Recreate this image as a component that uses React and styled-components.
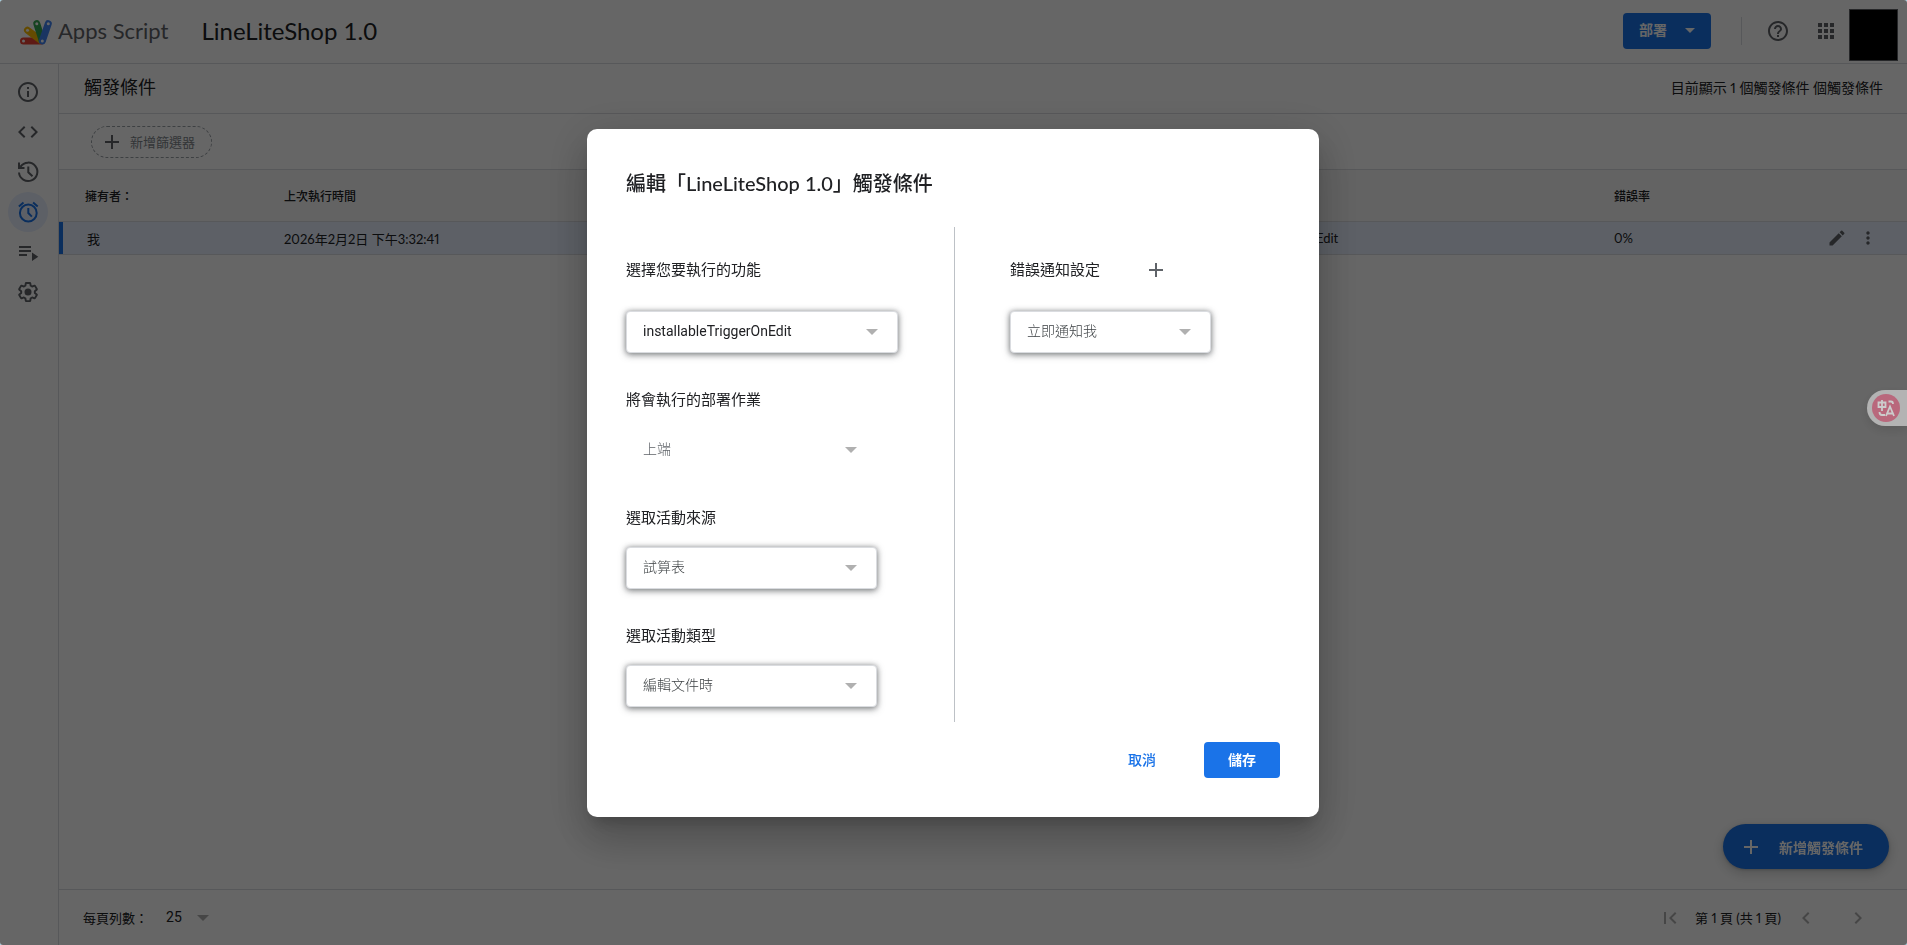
import React from "react";
import styled, { createGlobalStyle, css } from "styled-components";
import {
  MdAdd,
  MdApps,
  MdChevronLeft,
  MdChevronRight,
  MdCode,
  MdEdit,
  MdFirstPage,
  MdHelpOutline,
  MdInfoOutline,
  MdMoreVert,
} from "react-icons/md";

const sans = `Lato, "Noto Sans CJK TC", sans-serif`;
const roboto = `Roboto, "Noto Sans CJK TC", sans-serif`;
const line = "#dadce0";
const blue = "#1a73e8";

const GlobalStyle = createGlobalStyle`
  *, *::before, *::after { box-sizing: border-box; }
  html { background: #a5d3e6; }
  body { margin: 0; color: #202124; font-family: ${sans}; font-variant-numeric: proportional-nums; }
  button, select { font: inherit; }
  svg { display: block; flex: none; }
`;

const Page = styled.div`
  min-height: 100vh;
  display: flex;
  flex-direction: column;
  background: #fff;
  border-radius: 3px;
  overflow: hidden;
`;

const Header = styled.header`
  display: flex;
  align-items: center;
  height: 64px;
  padding: 0 9px 2px 16px;
  border-bottom: 1px solid ${line};
`;

const Brand = styled.a`
  display: flex;
  align-items: center;
  gap: 4px;
  color: #5f6368;
  font-size: 22px;
  line-height: 32px;
  text-decoration: none;
`;

const ProjectName = styled.h1`
  flex: 1;
  margin: 0 0 0 33px;
  font-size: 24px;
  line-height: 32px;
  font-weight: 400;
  font-variant-numeric: normal;
`;

const DeployButton = styled.button`
  display: flex;
  align-items: center;
  justify-content: space-between;
  width: 88px;
  height: 36px;
  padding: 0 16px 4px;
  border: 0;
  border-radius: 4px;
  background: ${blue};
  color: #fff;
  font-size: 14px;
  font-weight: 700;
  svg { margin-top: 4px; }
`;

const HeaderDivider = styled.span`
  width: 1px;
  height: 28px;
  margin: 0 24px 0 30px;
  background: ${line};
`;

const IconButton = styled.button`
  display: flex;
  align-items: center;
  justify-content: center;
  width: ${(p) => p.$size || 24}px;
  height: ${(p) => p.$size || 24}px;
  padding: 0;
  border: 0;
  background: none;
  color: ${(p) => p.$color || "#5f6368"};
`;

const HeaderActions = styled.div`
  display: flex;
  align-items: center;
  gap: 24px;
`;

const Avatar = styled.div`
  width: 49px;
  height: 52px;
  margin: 8px 0 0 11px;
  border: 1px solid #5f6368;
  background: #000;
`;

const Body = styled.div`
  flex: 1;
  display: flex;
`;

const Sidebar = styled.nav`
  display: flex;
  flex-direction: column;
  width: 59px;
  padding: 8px;
  border-right: 1px solid ${line};
`;

const NavLink = styled.a`
  display: flex;
  align-items: center;
  justify-content: center;
  width: 40px;
  height: 40px;
  border-radius: 50%;
  color: ${(p) => (p.$active ? blue : "#5f6368")};
  background: ${(p) => (p.$active ? "#e8f0fe" : "none")};
`;

const Main = styled.main`
  flex: 1;
  min-width: 0;
  display: flex;
  flex-direction: column;
`;

const TitleBar = styled.div`
  display: flex;
  align-items: center;
  justify-content: space-between;
  height: 50px;
  padding: 0 24px 4px 25px;
  border-bottom: 1px solid ${line};
  font-size: 14px;
`;

const PageTitle = styled.h2`
  margin: 0;
  font-size: 18px;
  line-height: 24px;
  font-weight: 400;
`;

const FilterBar = styled.div`
  display: flex;
  align-items: center;
  height: 56px;
  padding: 0 32px;
  border-bottom: 1px solid ${line};
`;

const FilterChip = styled.button`
  display: flex;
  align-items: center;
  gap: 6px;
  height: 32px;
  padding: 0 16px 0 8px;
  border: 1px dashed #9aa0a6;
  border-radius: 16px;
  background: none;
  color: #80868b;
  font-size: 13px;
  svg { color: #5f6368; }
`;

const Table = styled.table`
  width: 100%;
  border-collapse: separate;
  border-spacing: 0;
  table-layout: fixed;
`;

const HeadRow = styled.tr`
  height: 52px;
  background: #f8f8f8;
`;

const HeadCell = styled.th`
  width: ${(p) => p.$width};
  padding: 0 0 0 ${(p) => (p.$first ? 26 : 0)}px;
  border-bottom: 1px solid ${line};
  text-align: left;
  font-size: 12px;
  font-weight: 500;
`;

const Row = styled.tr`
  height: 33px;
  background: #e8f0fe;
`;

const Cell = styled.td`
  padding: 0;
  border-bottom: 1px solid ${line};
  font-size: 13px;
  ${(p) =>
    p.$first &&
    css`
      padding-left: 28px;
      box-shadow: inset 4px 0 0 ${blue};
    `}
`;

const RowActions = styled.div`
  display: flex;
  justify-content: flex-end;
  gap: 11px;
  padding-right: 29px;
`;

const Footer = styled.footer`
  display: flex;
  align-items: center;
  justify-content: space-between;
  height: 56px;
  margin-top: auto;
  padding: 0 37px 0 24px;
  border-top: 1px solid ${line};
  font-size: 13px;
`;

const PageSize = styled.label`
  display: flex;
  align-items: center;
  gap: 1px;
`;

const Pager = styled.div`
  display: flex;
  align-items: center;
  gap: 13px;
`;

const PagerArrows = styled.div`
  display: flex;
  gap: 28px;
`;

const Fab = styled.button`
  position: fixed;
  right: 18px;
  bottom: 76px;
  display: flex;
  align-items: center;
  gap: 16px;
  height: 45px;
  padding: 0 26px 0 16px;
  border: 0;
  border-radius: 23px;
  background: ${blue};
  color: #fff;
  font-size: 14px;
  font-weight: 700;
  box-shadow: 0 1px 3px rgba(60, 64, 67, 0.3), 0 4px 8px 3px rgba(60, 64, 67, 0.15);
`;

const Overlay = styled.div`
  position: fixed;
  inset: 0;
  display: flex;
  align-items: center;
  justify-content: center;
  padding-right: 1px;
  border-radius: 3px;
  background: rgba(0, 0, 0, 0.6);
`;

const Dialog = styled.form`
  width: 732px;
  padding: 39px;
  border-radius: 10px;
  background: #fff;
  box-shadow: 0 11px 15px -7px rgba(0, 0, 0, 0.2), 0 24px 38px 3px rgba(0, 0, 0, 0.14),
    0 9px 46px 8px rgba(0, 0, 0, 0.12);
`;

const DialogTitle = styled.h2`
  margin: 0 0 29px;
  font-size: 20px;
  line-height: 30px;
  font-weight: 500;
  font-variant-numeric: normal;
`;

const Columns = styled.div`
  display: grid;
  grid-template-columns: 329px 1fr;
`;

const Column = styled.div`
  display: flex;
  flex-direction: column;
  gap: 36px;
  padding: 32px 0 15px ${(p) => (p.$right ? 55 : 0)}px;
  border-right: ${(p) => (p.$right ? "0" : "1px solid #bdc1c6")};
`;

const Field = styled.div`
  display: flex;
  flex-direction: column;
  align-items: flex-start;
  gap: ${(p) => (p.$roomy ? 32 : 20)}px;
`;

const FieldHead = styled.div`
  display: flex;
  align-items: center;
  gap: 44px;
  height: 20px;
  button { margin-top: 3px; }
`;

const FieldLabel = styled.label`
  font-size: 15px;
  line-height: 20px;
`;

const SelectBox = styled.span`
  position: relative;
  display: inline-flex;
  width: ${(p) => p.$width}px;
  height: ${(p) => p.$height || 42}px;
  svg {
    position: absolute;
    right: ${(p) => (p.$compact ? 0 : 20)}px;
    top: 50%;
    margin-top: -3px;
    color: #b0b0b0;
    pointer-events: none;
  }
`;

const Select = styled.select`
  appearance: none;
  width: 100%;
  padding: 0 16px 2px 16px;
  border: 1px solid ${(p) => (p.$flat ? "transparent" : line)};
  border-radius: 4px;
  background: #fff;
  color: ${(p) => p.$color || "#3c4043"};
  font-family: ${roboto};
  font-size: 14px;
  font-weight: ${(p) => (p.$light ? 300 : 400)};
  box-shadow: ${(p) =>
    p.$flat ? "none" : "0 0 5px rgba(60, 64, 67, 0.35), 0 2px 7px rgba(60, 64, 67, 0.55)"};
`;

const DialogActions = styled.div`
  display: flex;
  justify-content: flex-end;
  gap: 24px;
  margin-top: 20px;
`;

const DialogButton = styled.button`
  width: 76px;
  height: 36px;
  padding: 0 0 2px;
  border: 0;
  border-radius: 4px;
  background: ${(p) => (p.$primary ? blue : "none")};
  color: ${(p) => (p.$primary ? "#fff" : blue)};
  font-size: 14px;
  font-weight: ${(p) => (p.$primary ? 700 : 500)};
`;

const TranslateTab = styled.button`
  position: fixed;
  right: 0;
  top: 390px;
  display: flex;
  align-items: center;
  width: 40px;
  height: 36px;
  padding: 0 0 0 5px;
  border: 0;
  border-radius: 18px 0 0 18px;
  background: #b3b3b3;
  box-shadow: 0 4px 12px rgba(0, 0, 0, 0.12);
`;

const Caret = () => (
  <svg width="12" height="6" viewBox="0 0 12 6" fill="currentColor" aria-hidden="true">
    <path d="M0 0h12L6 6z" />
  </svg>
);

const Logo = () => (
  <svg width="38" height="32" viewBox="0 0 38 32" fill="none" strokeLinecap="round" strokeWidth="7" aria-hidden="true">
    <path d="M7.5 26H25" stroke="#ea4335" />
    <path d="M11.5 15.2L25 25.4" stroke="#fbbc04" />
    <path d="M20.8 8.7L26 25" stroke="#34a853" />
    <path d="M32.3 8.7L26.3 26" stroke="#4285f4" />
    <g fill="#fff">
      <circle cx="7.5" cy="26" r="1.5" />
      <circle cx="11.5" cy="15.2" r="1.5" />
      <circle cx="20.8" cy="8.7" r="1.5" />
      <circle cx="32.3" cy="8.7" r="1.5" />
      <circle cx="26.3" cy="26" r="1.5" />
    </g>
  </svg>
);

const HistoryIcon = () => (
  <svg width="24" height="24" viewBox="0 0 24 24" fill="none" stroke="currentColor" strokeWidth="2" aria-hidden="true">
    <path d="M4.6 6.6A9.2 9.2 0 1 1 3 12.5" />
    <path d="M3 2.5V8h5.5" />
    <path d="M3 8V4.4L6.6 8z" fill="currentColor" stroke="none" />
    <path d="M12.3 6.5v5.7l4.2 4" />
  </svg>
);

const AlarmIcon = () => (
  <svg width="24" height="24" viewBox="0 0 24 24" fill="none" stroke="currentColor" strokeWidth="2" aria-hidden="true">
    <circle cx="12.3" cy="13" r="8.4" />
    <path d="M12.3 8v5l3.6 3.6M2.9 6.4l4.6-3.9M21.7 6.4l-4.6-3.9" />
  </svg>
);

const PlaylistIcon = () => (
  <svg width="24" height="24" viewBox="0 0 24 24" fill="currentColor" aria-hidden="true">
    <path d="M3 6h12v2H3zM3 10h12v2H3zM3 14h8v2H3zM16 12.5v8.5l6.3-4.2z" />
  </svg>
);

const GearIcon = () => (
  <svg width="24" height="24" viewBox="0 0 24 24" aria-hidden="true">
    <path
      transform="translate(1.1 1.1) scale(.91)"
      fill="none"
      stroke="currentColor"
      strokeWidth="2.1"
      strokeLinejoin="round"
      d="M19.43 12.98c.04-.32.07-.64.07-.98 0-.34-.03-.66-.07-.98l2.11-1.65c.19-.15.24-.42.12-.64l-2-3.46a.5.5 0 0 0-.61-.22l-2.49 1c-.52-.4-1.08-.73-1.69-.98l-.38-2.65A.488.488 0 0 0 14 2h-4c-.25 0-.46.18-.49.42l-.38 2.65c-.61.25-1.17.59-1.69.98l-2.49-1a.5.5 0 0 0-.61.22l-2 3.46c-.13.22-.07.49.12.64l2.11 1.65c-.04.32-.07.65-.07.98 0 .33.03.66.07.98l-2.11 1.65c-.19.15-.24.42-.12.64l2 3.46a.5.5 0 0 0 .61.22l2.49-1c.52.4 1.08.73 1.69.98l.38 2.65c.03.24.24.42.49.42h4c.25 0 .46-.18.49-.42l.38-2.65c.61-.25 1.17-.59 1.69-.98l2.49 1a.5.5 0 0 0 .61-.22l2-3.46c.12-.22.07-.49-.12-.64z"
    />
    <circle cx="12" cy="12" r="3.5" fill="currentColor" />
  </svg>
);

const TranslateIcon = () => (
  <svg width="28" height="28" viewBox="0 0 28 28" fill="none" stroke="#ccc" strokeWidth="1.8" aria-hidden="true">
    <circle cx="14" cy="14" r="14" fill="#b9687c" stroke="none" />
    <path d="M6.5 8.5h7v4.5h-7zM10 6v11M16.500 7.500h2.500q2 0 2 2.500M7.500 18q0 3 2.500 3h3" />
    <path d="M14 22l4-9.500 4 9.500M15.300 19.500h5.400" />
  </svg>
);

const navItems = [
  { name: "overview", label: "總覽", icon: <MdInfoOutline size={24} /> },
  { name: "editor", label: "編輯器", icon: <MdCode size={24} /> },
  { name: "history", label: "專案記錄", icon: <HistoryIcon /> },
  { name: "triggers", label: "觸發條件", icon: <AlarmIcon />, active: true },
  { name: "executions", label: "執行項目", icon: <PlaylistIcon /> },
  { name: "settings", label: "專案設定", icon: <GearIcon /> },
];

const fields = [
  { id: "fn", label: "選擇您要執行的功能", value: "installableTriggerOnEdit", width: 272, roomy: true, color: "#202124" },
  { id: "deployment", label: "將會執行的部署作業", value: "上端", width: 251, flat: true, light: true, color: "#5f6368" },
  { id: "source", label: "選取活動來源", value: "試算表", width: 251, light: true },
  { id: "event", label: "選取活動類型", value: "編輯文件時", width: 251, light: true },
];

function SelectField({ id, value, width, flat, light, color }) {
  return (
    <SelectBox $width={width}>
      <Select id={id} defaultValue={value} $flat={flat} $light={light} $color={color}>
        <option>{value}</option>
      </Select>
      <Caret />
    </SelectBox>
  );
}

export default function App() {
  return (
    <>
      <GlobalStyle />
      <Page>
        <Header>
          <Brand href="#home">
            <Logo />
            Apps Script
          </Brand>
          <ProjectName>LineLiteShop 1.0</ProjectName>
          <DeployButton type="button">
            部署
            <svg width="10" height="5" viewBox="0 0 10 5" fill="currentColor" aria-hidden="true">
              <path d="M0 0h10L5 5z" />
            </svg>
          </DeployButton>
          <HeaderDivider />
          <HeaderActions>
            <IconButton type="button" aria-label="說明"><MdHelpOutline size={24} /></IconButton>
            <IconButton type="button" aria-label="Google 應用程式"><MdApps size={24} /></IconButton>
          </HeaderActions>
          <Avatar />
        </Header>
        <Body>
          <Sidebar>
            {navItems.map((item) => (
              <NavLink key={item.name} href={`#${item.name}`} aria-label={item.label} $active={item.active}>
                {item.icon}
              </NavLink>
            ))}
          </Sidebar>
          <Main>
            <TitleBar>
              <PageTitle>觸發條件</PageTitle>
              <span>目前顯示 1 個觸發條件 個觸發條件</span>
            </TitleBar>
            <FilterBar>
              <FilterChip type="button">
                <MdAdd size={24} />
                新增篩選器
              </FilterChip>
            </FilterBar>
            <Table>
              <thead>
                <HeadRow>
                  <HeadCell $width="225px" $first>擁有者：</HeadCell>
                  <HeadCell>上次執行時間</HeadCell>
                  <HeadCell $width="410px" />
                  <HeadCell $width="140px">錯誤率</HeadCell>
                  <HeadCell $width="153px" />
                </HeadRow>
              </thead>
              <tbody>
                <Row>
                  <Cell $first>我</Cell>
                  <Cell>2026年2月2日 下午3:32:41</Cell>
                  <Cell>installableTriggerOnEdit</Cell>
                  <Cell>0%</Cell>
                  <Cell>
                    <RowActions>
                      <IconButton type="button" aria-label="編輯觸發條件" $size={20}><MdEdit size={20} /></IconButton>
                      <IconButton type="button" aria-label="更多" $size={20}><MdMoreVert size={20} /></IconButton>
                    </RowActions>
                  </Cell>
                </Row>
              </tbody>
            </Table>
            <Footer>
              <PageSize>
                每頁列數：
                <SelectBox $width={60} $height={24} $compact>
                  <Select $flat $color="#202124" defaultValue="25">
                    <option>25</option>
                  </Select>
                  <Caret />
                </SelectBox>
              </PageSize>
              <Pager>
                <IconButton type="button" aria-label="第一頁" $color="#b0b0b0"><MdFirstPage size={24} /></IconButton>
                <span>第 1 頁 (共 1 頁)</span>
                <PagerArrows>
                  <IconButton type="button" aria-label="上一頁" $color="#b0b0b0"><MdChevronLeft size={24} /></IconButton>
                  <IconButton type="button" aria-label="下一頁" $color="#b0b0b0"><MdChevronRight size={24} /></IconButton>
                </PagerArrows>
              </Pager>
            </Footer>
          </Main>
        </Body>
        <Fab type="button">
          <MdAdd size={24} />
          新增觸發條件
        </Fab>
      </Page>
      <Overlay>
        <Dialog role="dialog" aria-labelledby="dialog-title" onSubmit={(e) => e.preventDefault()}>
          <DialogTitle id="dialog-title">編輯「LineLiteShop 1.0」觸發條件</DialogTitle>
          <Columns>
            <Column>
              {fields.map((f) => (
                <Field key={f.id} $roomy={f.roomy}>
                  <FieldLabel htmlFor={f.id}>{f.label}</FieldLabel>
                  <SelectField {...f} />
                </Field>
              ))}
            </Column>
            <Column $right>
              <Field $roomy>
                <FieldHead>
                  <FieldLabel htmlFor="notify">錯誤通知設定</FieldLabel>
                  <IconButton type="button" aria-label="新增通知"><MdAdd size={24} /></IconButton>
                </FieldHead>
                <SelectField id="notify" value="立即通知我" width={201} light />
              </Field>
            </Column>
          </Columns>
          <DialogActions>
            <DialogButton type="button">取消</DialogButton>
            <DialogButton type="submit" $primary>儲存</DialogButton>
          </DialogActions>
        </Dialog>
      </Overlay>
      <TranslateTab type="button" aria-label="翻譯">
        <TranslateIcon />
      </TranslateTab>
    </>
  );
}
